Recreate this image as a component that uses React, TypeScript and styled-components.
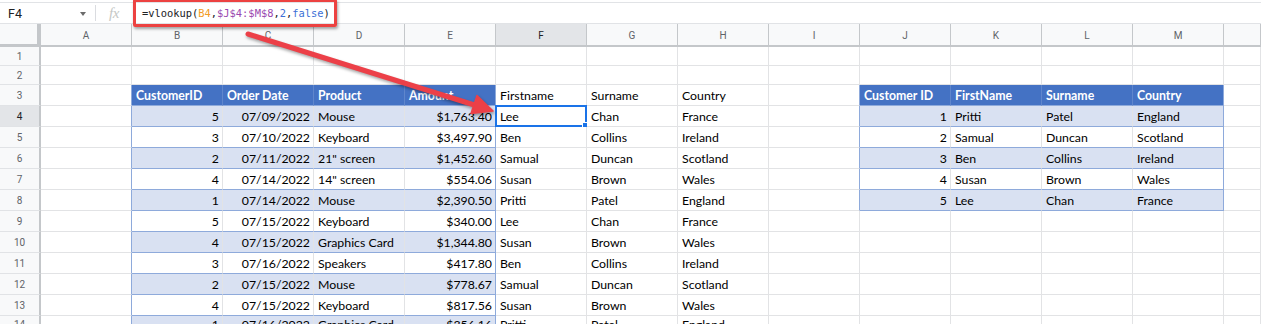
import React from 'react';
import styled, { createGlobalStyle } from 'styled-components';

const GlobalStyle = createGlobalStyle`
  html, body { margin: 0; padding: 0; background: #fff; overflow: hidden; }
  body { font-family: Lato, "Liberation Sans", sans-serif; }
`;

const Page = styled.div`
  position: relative;
  width: 1261px;
  height: 324px;
  overflow: hidden;
  background: #fff;
  padding-top: 2px;
  box-sizing: border-box;
`;

const FormulaBar = styled.div`
  display: flex;
  align-items: center;
  height: 22px;
  box-sizing: border-box;
  border-top: 1px solid #e1e3e6;
  border-bottom: 1px solid #e1e3e6;
`;

const NameBox = styled.div`
  width: 95px;
  box-sizing: border-box;
  display: flex;
  align-items: center;
  justify-content: space-between;
  padding: 0 9px 0 8px;
  font-family: Roboto, "Liberation Sans", sans-serif;
  font-size: 12.5px;
  color: #202124;
`;

const Caret = styled.span`
  width: 0;
  height: 0;
  border-left: 3.5px solid transparent;
  border-right: 3.5px solid transparent;
  border-top: 4px solid #6b6b6b;
  margin-top: 2px;
`;

const Divider = styled.div`
  width: 1px;
  height: 16px;
  background: #dadce0;
`;

const FxBox = styled.div`
  width: 36px;
  display: flex;
  justify-content: center;
  font-family: "Liberation Serif", serif;
  font-style: italic;
  font-size: 15px;
  color: #c4c7c5;
  letter-spacing: -0.5px;
`;

const FormulaText = styled.div`
  padding-left: 10px;
  font-family: "DejaVu Sans Mono", "Liberation Mono", monospace;
  font-size: 10.4px;
  color: #202124;
  white-space: pre;
`;

const Tok = styled.span<{ $c: string }>`
  color: ${p => p.$c};
`;

const Sheet = styled.div`
  display: grid;
  grid-template-columns: 41px repeat(13, 91px) 1fr;
  grid-template-rows: 23px 19px 19px repeat(11, 21px);
`;

const Corner = styled.div`
  background: #f8f9fa;
  border-right: 4px solid #c4c7ca;
  border-bottom: 3px solid #c4c7ca;
  box-sizing: border-box;
`;

const ColHeader = styled.div<{ $active: boolean }>`
  display: flex;
  align-items: center;
  justify-content: center;
  box-sizing: border-box;
  background: ${p => (p.$active ? '#e3e5e8' : '#f8f9fa')};
  border-right: 1px solid #c4c7ca;
  border-bottom: 2px solid #c4c7ca;
  font-family: Roboto, "Liberation Sans", sans-serif;
  font-size: 10px;
  color: ${p => (p.$active ? '#202124' : '#5f6368')};
  padding-top: 1px;
`;

const RowHeader = styled.div<{ $active: boolean }>`
  display: flex;
  align-items: center;
  justify-content: center;
  box-sizing: border-box;
  background: ${p => (p.$active ? '#e3e5e8' : '#f8f9fa')};
  border-right: 2px solid #c4c7ca;
  border-bottom: 1px solid #e1e3e6;
  font-family: Roboto, "Liberation Sans", sans-serif;
  font-size: 10px;
  color: ${p => (p.$active ? '#202124' : '#5f6368')};
`;

type Kind = 'plain' | 'head' | 'band' | 'row';

const BG: Record<Kind, string> = {
  plain: '#ffffff',
  head: '#4472c4',
  band: '#d9e1f2',
  row: '#ffffff',
};

const Cell = styled.div<{ $kind: Kind; $right: boolean; $rc: string; $bc: string }>`
  position: relative;
  display: flex;
  align-items: center;
  justify-content: ${p => (p.$right ? 'flex-end' : 'flex-start')};
  box-sizing: border-box;
  min-width: 0;
  padding: 1px 3px 0 4px;
  white-space: nowrap;
  overflow: visible;
  background: ${p => BG[p.$kind]};
  border-right: 1px solid ${p => p.$rc};
  border-bottom: 1px solid ${p => p.$bc};
  font-family: Lato, "Liberation Sans", sans-serif;
  font-size: 12.3px;
  font-weight: ${p => (p.$kind === 'head' ? 700 : 400)};
  color: ${p => (p.$kind === 'head' ? '#ffffff' : '#000000')};
`;

const Selection = styled.div`
  position: absolute;
  left: -1px;
  top: -1px;
  right: -1px;
  bottom: -1px;
  border: 2px solid #1a73e8;
  pointer-events: none;
`;

const FillHandle = styled.div`
  position: absolute;
  right: -4px;
  bottom: -4px;
  width: 5px;
  height: 5px;
  background: #1a73e8;
  border: 1px solid #fff;
`;

const Highlight = styled.div`
  position: absolute;
  left: 133px;
  top: -1px;
  width: 204px;
  height: 28px;
  box-sizing: border-box;
  border: 3.5px solid #ec4241;
  border-radius: 2px;
  box-shadow: 1px 2px 3px rgba(0, 0, 0, 0.35);
  pointer-events: none;
`;

const ArrowLayer = styled.svg`
  position: absolute;
  left: 0;
  top: 0;
  pointer-events: none;
  filter: drop-shadow(1px 2px 1.5px rgba(0, 0, 0, 0.35));
`;

const COLS = ['A', 'B', 'C', 'D', 'E', 'F', 'G', 'H', 'I', 'J', 'K', 'L', 'M', 'N'];

const TABLES = [
  { top: 3, bottom: 14, left: 1, right: 4 },
  { top: 3, bottom: 8, left: 9, right: 12 },
];

const leftRows: string[][] = [
  ['5', '07/09/2022', 'Mouse', '$1,763.40', 'Lee', 'Chan', 'France'],
  ['3', '07/10/2022', 'Keyboard', '$3,497.90', 'Ben', 'Collins', 'Ireland'],
  ['2', '07/11/2022', '21" screen', '$1,452.60', 'Samual', 'Duncan', 'Scotland'],
  ['4', '07/14/2022', '14" screen', '$554.06', 'Susan', 'Brown', 'Wales'],
  ['1', '07/14/2022', 'Mouse', '$2,390.50', 'Pritti', 'Patel', 'England'],
  ['5', '07/15/2022', 'Keyboard', '$340.00', 'Lee', 'Chan', 'France'],
  ['4', '07/15/2022', 'Graphics Card', '$1,344.80', 'Susan', 'Brown', 'Wales'],
  ['3', '07/16/2022', 'Speakers', '$417.80', 'Ben', 'Collins', 'Ireland'],
  ['2', '07/15/2022', 'Mouse', '$778.67', 'Samual', 'Duncan', 'Scotland'],
  ['4', '07/15/2022', 'Keyboard', '$817.56', 'Susan', 'Brown', 'Wales'],
  ['1', '07/16/2022', 'Graphics Card', '$356.16', 'Pritti', 'Patel', 'England'],
];

const rightRows: string[][] = [
  ['1', 'Pritti', 'Patel', 'England'],
  ['2', 'Samual', 'Duncan', 'Scotland'],
  ['3', 'Ben', 'Collins', 'Ireland'],
  ['4', 'Susan', 'Brown', 'Wales'],
  ['5', 'Lee', 'Chan', 'France'],
];

const DATA: Record<string, string> = {};
const put = (r: number, c: number, v: string) => {
  DATA[`${r}-${c}`] = v;
};
['CustomerID', 'Order Date', 'Product', 'Amount', 'Firstname', 'Surname', 'Country'].forEach((v, i) => put(3, 1 + i, v));
['Customer ID', 'FirstName', 'Surname', 'Country'].forEach((v, i) => put(3, 9 + i, v));
leftRows.forEach((row, i) => row.forEach((v, j) => put(4 + i, 1 + j, v)));
rightRows.forEach((row, i) => row.forEach((v, j) => put(4 + i, 9 + j, v)));

const RIGHT_COLS = new Set([1, 2, 4, 9]);
const GRID = '#e2e3e5';
const TBORDER = '#8eaadb';

function cellInfo(r: number, c: number) {
  const t = TABLES.find(t => r >= t.top && r <= t.bottom && c >= t.left && c <= t.right);
  const beforeTable = TABLES.some(t => r >= t.top && r <= t.bottom && c + 1 === t.left);
  let kind: Kind = 'plain';
  if (t) {
    if (r === t.top) kind = 'head';
    else kind = (r - t.top) % 2 === 1 ? 'band' : 'row';
  }
  let rc = GRID;
  if (beforeTable || (t && c === t.right)) rc = TBORDER;
  else if (kind === 'head') rc = '#5f86cc';
  const bc = t ? TBORDER : GRID;
  const right = r > 3 && RIGHT_COLS.has(c);
  return { kind, rc, bc, right };
}

const ROWS = Array.from({ length: 14 }, (_, i) => i + 1);

export default function App() {
  return (
    <Page>
      <GlobalStyle />
      <FormulaBar>
        <NameBox>
          <span>F4</span>
          <Caret />
        </NameBox>
        <Divider />
        <FxBox>fx</FxBox>
        <FormulaText>
          <Tok $c="#202124">=vlookup(</Tok>
          <Tok $c="#f29b24">B4</Tok>
          <Tok $c="#202124">,</Tok>
          <Tok $c="#9a48b0">$J$4:$M$8</Tok>
          <Tok $c="#202124">,</Tok>
          <Tok $c="#3b6fd6">2</Tok>
          <Tok $c="#202124">,</Tok>
          <Tok $c="#3b6fd6">false</Tok>
          <Tok $c="#202124">)</Tok>
        </FormulaText>
      </FormulaBar>
      <Sheet>
        <Corner />
        {COLS.map((l, i) => (
          <ColHeader key={l} $active={i === 5}>
            {i < 13 ? l : ''}
          </ColHeader>
        ))}
        {ROWS.map(r => (
          <React.Fragment key={r}>
            <RowHeader $active={r === 4}>{r}</RowHeader>
            {COLS.map((_, c) => {
              const info = cellInfo(r, c);
              const selected = r === 4 && c === 5;
              return (
                <Cell key={c} $kind={info.kind} $right={info.right} $rc={info.rc} $bc={info.bc}>
                  {DATA[`${r}-${c}`] ?? ''}
                  {selected && (
                    <Selection>
                      <FillHandle />
                    </Selection>
                  )}
                </Cell>
              );
            })}
          </React.Fragment>
        ))}
      </Sheet>
      <Highlight />
      <ArrowLayer width={1261} height={324} viewBox="0 0 1261 324">
        <line x1={248} y1={34} x2={476} y2={105.5} stroke="#ec4048" strokeWidth={5} strokeLinecap="round" />
        <polygon points="493,111 471,113.5 477,95.5" fill="#ec4048" stroke="#ec4048" strokeWidth={1.5} strokeLinejoin="round" />
      </ArrowLayer>
    </Page>
  );
}
